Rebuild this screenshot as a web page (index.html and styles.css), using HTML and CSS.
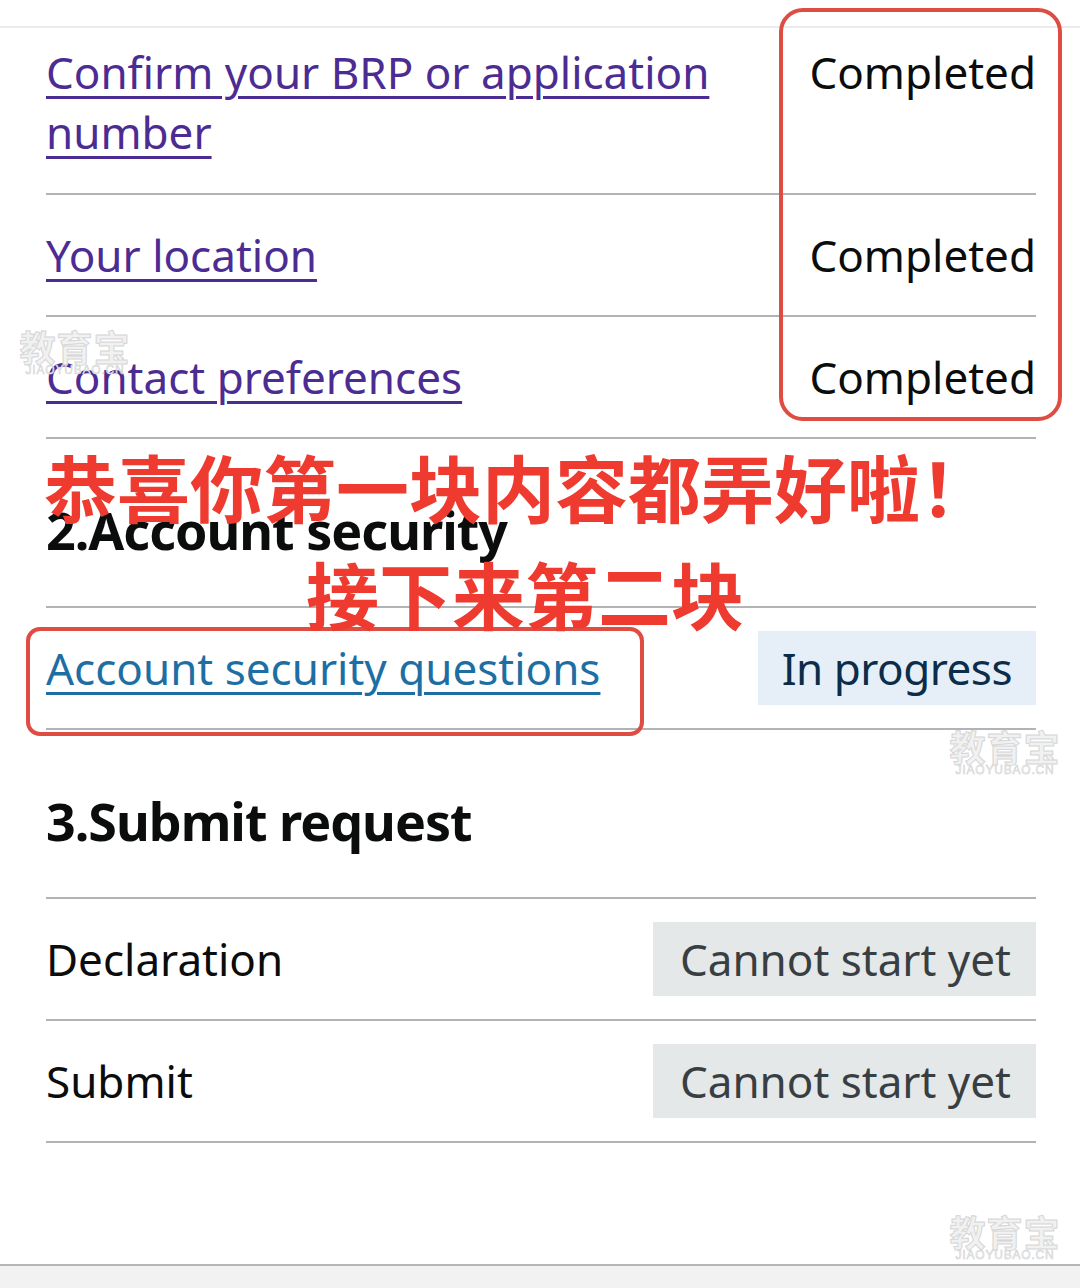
FILE: index.html
```html
<!DOCTYPE html>
<html lang="en">

<head>
    <meta charset="UTF-8">
    <meta name="viewport" content="width=device-width, initial-scale=1.0">
    <title>Task list</title>
    <link rel="stylesheet" href="styles.css">
</head>

<body>
    <div class="page">
        <main class="task-list">
            <ul class="tasks">
                <li class="task task-first">
                    <a class="task-link" href="#">Confirm your BRP or application<br>number</a>
                    <span class="status">Completed</span>
                </li>
                <li class="task">
                    <a class="task-link" href="#">Your location</a>
                    <span class="status">Completed</span>
                </li>
                <li class="task">
                    <a class="task-link" href="#">Contact preferences</a>
                    <span class="status">Completed</span>
                </li>
            </ul>

            <h2 class="section-title">2.Account security</h2>
            <ul class="tasks tasks-bordered">
                <li class="task">
                    <a class="task-link task-link-new" href="#">Account security questions</a>
                    <span class="status tag tag-blue">In progress</span>
                </li>
            </ul>

            <h2 class="section-title">3.Submit request</h2>
            <ul class="tasks tasks-bordered">
                <li class="task">
                    <span class="task-name">Declaration</span>
                    <span class="status tag tag-grey">Cannot start yet</span>
                </li>
                <li class="task">
                    <span class="task-name">Submit</span>
                    <span class="status tag tag-grey">Cannot start yet</span>
                </li>
            </ul>
        </main>

        <footer class="footer"></footer>

        <!-- annotations drawn over the screenshot -->
        <div class="mark mark-status"></div>
        <div class="mark mark-link"></div>
        <p class="note note-one">恭喜你第一块内容都弄好啦！</p>
        <p class="note note-two">接下来第二块</p>

        <div class="watermark wm-1"><span class="wm-cn">教育宝</span><span class="wm-en">JIAOYUBAO.CN</span></div>
        <div class="watermark wm-2"><span class="wm-cn">教育宝</span><span class="wm-en">JIAOYUBAO.CN</span></div>
        <div class="watermark wm-3"><span class="wm-cn">教育宝</span><span class="wm-en">JIAOYUBAO.CN</span></div>
    </div>
</body>

</html>
```

FILE: styles.css
```css
body {
    margin: 0;
    background-color: #ffffff;
    color: #0b0c0c;
    font-family: 'Noto Sans', 'Open Sans', sans-serif;
}

.page {
    position: relative;
    height: 1288px;
    overflow: hidden;
    padding-top: 26px;
    box-sizing: border-box;
}

.task-list {
    border-top: 2px solid #ebebeb;
    padding: 0 44px 0 46px;
}

.tasks {
    list-style: none;
    margin: 0;
    padding: 0;
}

.tasks-bordered {
    border-top: 2px solid #b1b4b6;
}

.task {
    display: flex;
    justify-content: space-between;
    align-items: center;
    min-height: 74px;
    padding: 23px 0;
    border-bottom: 2px solid #b1b4b6;
    font-size: 44px;
    line-height: 60px;
}

.task-first {
    align-items: flex-start;
    padding: 14px 0 31px;
}

.task-link {
    color: #4c2c92;
    text-decoration: underline;
    text-decoration-thickness: 3px;
    text-underline-offset: 7px;
}

.task-link-new {
    color: #1d6fa3;
}

.status {
    white-space: nowrap;
}

.tag {
    padding: 7px 25px 7px 27px;
}

.tag-blue {
    background-color: #e6eff7;
    color: #0c2d4a;
    padding: 7px 24px;
    letter-spacing: -0.5px;
}

.tag-grey {
    background-color: #e5e8e8;
    color: #383f43;
}

.section-title {
    margin: 0;
    padding: 61px 0 46px;
    font-size: 52px;
    line-height: 60px;
    font-weight: 700;
    letter-spacing: -1px;
}

.footer {
    margin-top: 121px;
    height: 40px;
    border-top: 2px solid #b6b6b6;
    background-color: #f2f2f2;
}

/* red annotations */
.mark {
    position: absolute;
    border: 4px solid #df4c42;
    box-sizing: border-box;
}

.mark-status {
    left: 779px;
    top: 8px;
    width: 283px;
    height: 413px;
    border-radius: 24px;
}

.mark-link {
    left: 26px;
    top: 627px;
    width: 618px;
    height: 109px;
    border-radius: 14px;
}

.note {
    position: absolute;
    margin: 0;
    color: #ee3a2f;
    font-family: 'Noto Sans CJK SC', sans-serif;
    font-weight: 700;
    font-size: 73px;
    line-height: 1;
    white-space: nowrap;
}

.note-one {
    left: 44px;
    top: 449px;
}

.note-two {
    left: 306px;
    top: 556px;
}

/* watermarks */
.watermark {
    position: absolute;
    display: flex;
    flex-direction: column;
    align-items: center;
    width: 112px;
    color: #f1f1f1;
    font-family: 'Noto Sans CJK SC', sans-serif;
    -webkit-text-stroke: 1px #d6d6d6;
}

.wm-cn {
    font-size: 36px;
    line-height: 36px;
    font-weight: 700;
    letter-spacing: 1px;
}

.wm-en {
    font-family: 'Liberation Sans', sans-serif;
    font-size: 12px;
    line-height: 12px;
    letter-spacing: 0.8px;
    -webkit-text-stroke: 0.5px #cfcfcf;
}

.wm-1 {
    left: 19px;
    top: 328px;
}

.wm-2 {
    left: 949px;
    top: 728px;
}

.wm-3 {
    left: 949px;
    top: 1213px;
}
```
